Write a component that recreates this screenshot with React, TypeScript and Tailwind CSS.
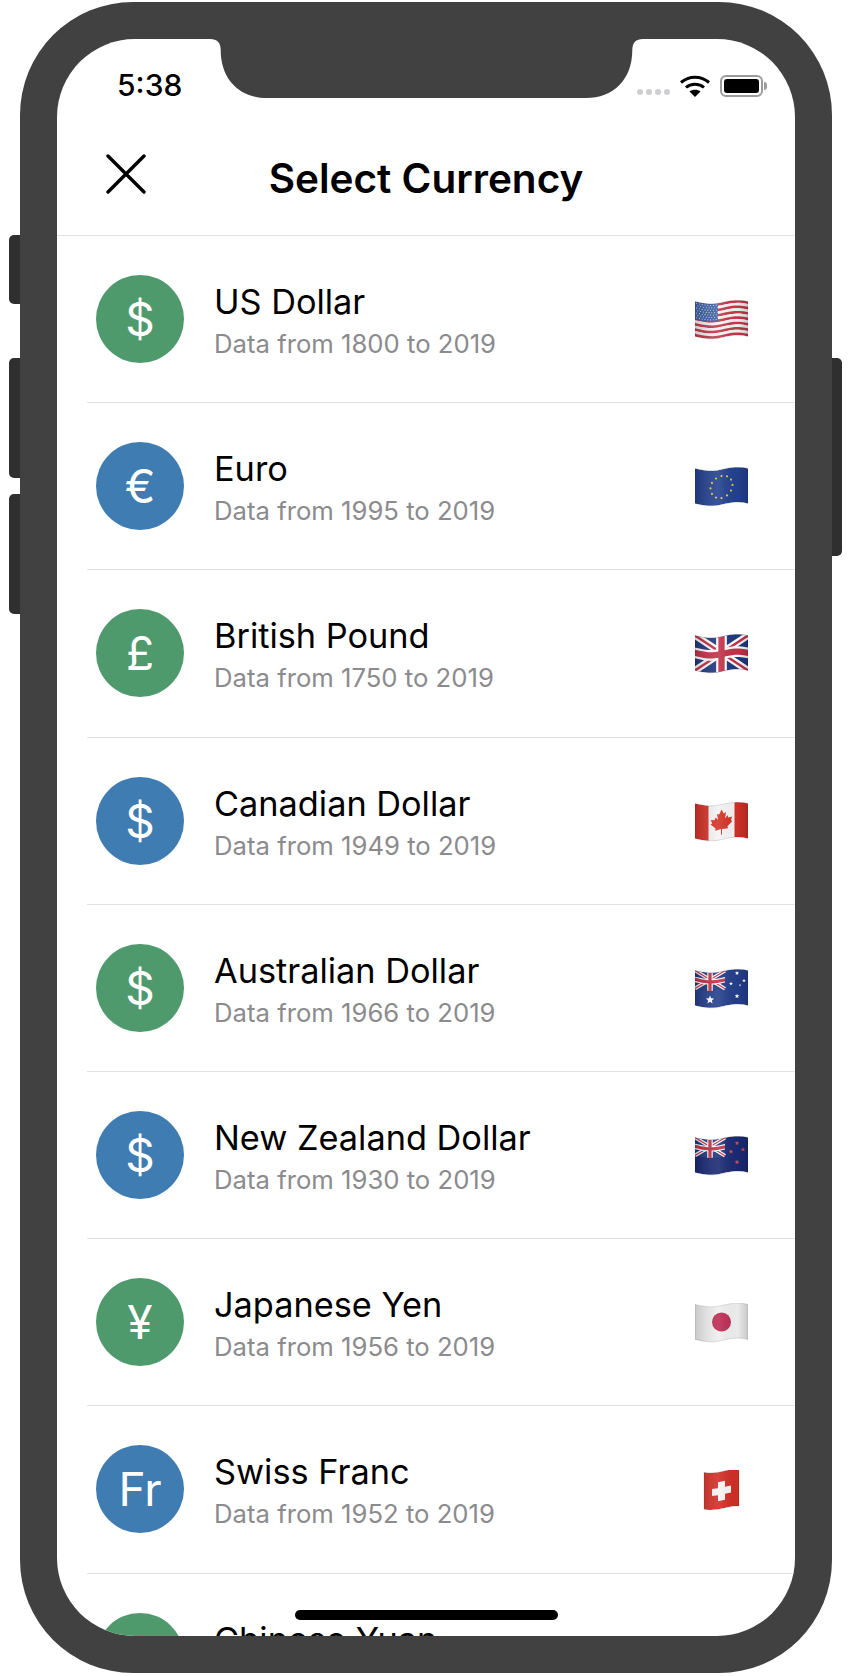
// Currency picker inside a phone frame. Flags are small wavy SVG drawings.
const BLUE = "#1f3a80";
const RED = "#c4324a";

type Pt = [number, number];

// flag wave: shifts a point vertically depending on its x
const off = (x: number) => 1.9 * Math.cos(2 * Math.PI * (x / 53 - 0.3));
const warp = (pts: Pt[]) => pts.map(([x, y]) => `${x},${(y + off(x)).toFixed(2)}`).join(" ");

function band(x0: number, x1: number, y0: number, y1: number): Pt[] {
  const top: Pt[] = [];
  const bottom: Pt[] = [];
  for (let i = 0; i <= 12; i++) {
    const x = x0 + ((x1 - x0) * i) / 12;
    top.push([x, y0]);
    bottom.unshift([x, y1]);
  }
  return [...top, ...bottom];
}

function Band({ x0, x1, y0, y1, fill }: { x0: number; x1: number; y0: number; y1: number; fill: string }) {
  return <polygon points={warp(band(x0, x1, y0, y1))} fill={fill} />;
}

function Dot({ x, y, r, fill }: { x: number; y: number; r: number; fill: string }) {
  return <circle cx={x} cy={y + off(x)} r={r} fill={fill} />;
}

function Star({ x, y, r, fill }: { x: number; y: number; r: number; fill: string }) {
  const pts: Pt[] = [];
  for (let i = 0; i < 10; i++) {
    const a = (Math.PI * i) / 5 - Math.PI / 2;
    const rr = i % 2 ? r * 0.45 : r;
    pts.push([x + rr * Math.cos(a), y + rr * Math.sin(a)]);
  }
  return <polygon points={pts.map(([a, b]) => `${a},${b + off(x)}`).join(" ")} fill={fill} />;
}

function Jack({ w, h }: { w: number; h: number }) {
  const cx = w / 2;
  const cy = 1 + h / 2;
  const d = (x0: number, y0: number, x1: number, y1: number, c: string, sw: number) => (
    <line
      x1={x0}
      y1={y0 + off(x0)}
      x2={x1}
      y2={y1 + off(x1)}
      stroke={c}
      strokeWidth={sw}
    />
  );
  const t = h * 0.09;
  return (
    <>
      <Band x0={0} x1={w} y0={1} y1={1 + h} fill={BLUE} />
      {d(0, 1, w, 1 + h, "#fff", h * 0.2)}
      {d(0, 1 + h, w, 1, "#fff", h * 0.2)}
      {d(0, 1, w, 1 + h, RED, h * 0.07)}
      {d(0, 1 + h, w, 1, RED, h * 0.07)}
      <Band x0={0} x1={w} y0={cy - t * 1.7} y1={cy + t * 1.7} fill="#fff" />
      <polygon points={warp([[cx - t * 1.7, 1], [cx + t * 1.7, 1], [cx + t * 1.7, 1 + h], [cx - t * 1.7, 1 + h]])} fill="#fff" />
      <Band x0={0} x1={w} y0={cy - t} y1={cy + t} fill={RED} />
      <polygon points={warp([[cx - t, 1], [cx + t, 1], [cx + t, 1 + h], [cx - t, 1 + h]])} fill={RED} />
    </>
  );
}

function FlagArt({ code }: { code: string }) {
  if (code === "us") {
    const stripes = [];
    for (let i = 0; i < 13; i++) {
      stripes.push(
        <Band key={i} x0={0} x1={53} y0={1 + (i * 35) / 13} y1={1 + ((i + 1) * 35) / 13} fill={i % 2 ? "#f4f2f2" : "#c23a4a"} />,
      );
    }
    const dots = [];
    for (let r = 0; r < 7; r++) {
      for (let c = 0; c < 8; c++) {
        dots.push(<Dot key={`${r}-${c}`} x={1.6 + c * 2.8 + (r % 2) * 1.2} y={2.6 + r * 2.4} r={0.55} fill="#dfe6f2" />);
      }
    }
    return (
      <>
        {stripes}
        <Band x0={0} x1={23} y0={1} y1={19} fill="#3f62a6" />
        {dots}
      </>
    );
  }
  if (code === "eu") {
    const stars = [];
    for (let i = 0; i < 12; i++) {
      const a = (i * Math.PI) / 6;
      stars.push(<Dot key={i} x={26.5 + 11 * Math.sin(a)} y={18.5 - 11 * Math.cos(a)} r={1.05} fill="#e6c84a" />);
    }
    return (
      <>
        <Band x0={0} x1={53} y0={1} y1={36} fill="#23418f" />
        {stars}
      </>
    );
  }
  if (code === "gb") return <Jack w={53} h={35} />;
  if (code === "ca") {
    const leaf: Pt[] = [
      [26.5, 6], [28.8, 10.5], [31, 9.5], [30, 15.5], [32.5, 13], [33.5, 15.5], [37.2, 15], [35.8, 18.5], [37.4, 19.5],
      [32.4, 24], [33, 26], [27, 25.4], [27, 31], [26, 31], [26, 25.4], [20, 26], [20.6, 24], [15.6, 19.5],
      [17.2, 18.5], [15.8, 15], [19.5, 15.5], [20.5, 13], [23, 15.5], [22, 9.5], [24.2, 10.5],
    ];
    return (
      <>
        <Band x0={0} x1={53} y0={1} y1={36} fill="#f5f3f3" />
        <Band x0={0} x1={13.5} y0={1} y1={36} fill="#d53328" />
        <Band x0={39.5} x1={53} y0={1} y1={36} fill="#cf3026" />
        <polygon points={warp(leaf)} fill="#d53328" />
      </>
    );
  }
  if (code === "au") {
    return (
      <>
        <Band x0={0} x1={53} y0={1} y1={36} fill="#243f8c" />
        <Jack w={30} h={18} />
        <Star x={15} y={28} r={4.4} fill="#fff" />
        <Star x={42} y={5} r={2.2} fill="#fff" />
        <Star x={36} y={15} r={2} fill="#fff" />
        <Star x={49} y={12} r={2} fill="#fff" />
        <Star x={45} y={17} r={1.2} fill="#fff" />
        <Star x={42} y={28} r={2.4} fill="#fff" />
      </>
    );
  }
  if (code === "nz") {
    return (
      <>
        <Band x0={0} x1={53} y0={1} y1={36} fill="#1b2a74" />
        <Jack w={30} h={18} />
        <Star x={42} y={8} r={2.4} fill="#c4525a" />
        <Star x={36} y={16} r={2.4} fill="#c4525a" />
        <Star x={48} y={14} r={2.4} fill="#c4525a" />
        <Star x={42} y={27} r={2.6} fill="#c4525a" />
      </>
    );
  }
  if (code === "jp") {
    return (
      <>
        <Band x0={0} x1={53} y0={1} y1={36} fill="#efefef" />
        <Dot x={26.5} y={17.5} r={9.5} fill="#bd2c55" />
      </>
    );
  }
  // Swiss flag is square, drawn in the middle of the box
  return (
    <>
      <Band x0={9} x1={44} y0={0} y1={37} fill="#d02e26" />
      <polygon points={warp([[23, 10], [30, 10], [30, 16], [36, 16], [36, 23], [30, 23], [30, 29], [23, 29], [23, 23], [17, 23], [17, 16], [23, 16]])} fill="#f7f4f4" />
    </>
  );
}

function Flag({ code }: { code: string }) {
  const outline = code === "ch" ? band(9, 44, 0, 37) : band(0, 53, 1, 36);
  return (
    <svg width="53" height="40" viewBox="0 -1 53 40" className="mt-[2px] shrink-0">
      <defs>
        <clipPath id={`clip-${code}`}>
          <polygon points={warp(outline)} />
        </clipPath>
        <linearGradient id={`shade-${code}`} x1="0" y1="0" x2="1" y2="0">
          <stop offset="0" stopColor="#000" stopOpacity="0.16" />
          <stop offset="0.45" stopColor="#fff" stopOpacity="0.1" />
          <stop offset="0.8" stopColor="#000" stopOpacity="0.02" />
          <stop offset="1" stopColor="#000" stopOpacity="0.16" />
        </linearGradient>
      </defs>
      <g clipPath={`url(#clip-${code})`}>
        <FlagArt code={code} />
        <rect x="0" y="-2" width="53" height="42" fill={`url(#shade-${code})`} />
      </g>
      <polygon points={warp(outline)} fill="none" stroke="#000" strokeOpacity="0.16" strokeWidth="0.8" />
    </svg>
  );
}

const currencies = [
  { name: "US Dollar", sub: "Data from 1800 to 2019", sym: "$", tone: "green", flag: "us" },
  { name: "Euro", sub: "Data from 1995 to 2019", sym: "€", tone: "blue", flag: "eu" },
  { name: "British Pound", sub: "Data from 1750 to 2019", sym: "£", tone: "green", flag: "gb" },
  { name: "Canadian Dollar", sub: "Data from 1949 to 2019", sym: "$", tone: "blue", flag: "ca" },
  { name: "Australian Dollar", sub: "Data from 1966 to 2019", sym: "$", tone: "green", flag: "au" },
  { name: "New Zealand Dollar", sub: "Data from 1930 to 2019", sym: "$", tone: "blue", flag: "nz" },
  { name: "Japanese Yen", sub: "Data from 1956 to 2019", sym: "¥", tone: "green", flag: "jp" },
  { name: "Swiss Franc", sub: "Data from 1952 to 2019", sym: "Fr", tone: "blue", flag: "ch" },
  // last row runs under the bottom edge, only its top shows
  { name: "Chinese Yuan", sub: "", sym: "", tone: "green", flag: "" },
];

function Row({ c }: { c: (typeof currencies)[number] }) {
  return (
    <div className="ml-[30px] flex h-[167.2px] shrink-0 items-center border-b-[1.5px] border-[#e1e1e4] pl-[9px] pr-[47px]">
      <div
        className={`flex h-[88px] w-[88px] shrink-0 items-center justify-center rounded-full text-[46px] font-normal leading-none text-white ${
          c.tone === "green" ? "bg-[#4f9a6c]" : "bg-[#3e7cb1]"
        }`}
      >
        {c.sym}
      </div>
      <div className="ml-[30px] flex h-[80px] flex-1 flex-col pt-[2px]">
        <div className="text-[34.3px] leading-[42px] text-black">{c.name}</div>
        <div className="mt-[5px] text-[25.7px] leading-[32px] text-[#8b8b8e]">{c.sub}</div>
      </div>
      {c.flag && <Flag code={c.flag} />}
    </div>
  );
}

function StatusIcons() {
  return (
    <div className="mb-[5px] flex items-center">
      <div className="mt-[12px] flex gap-[3px]">
        {[0, 1, 2, 3].map((i) => (
          <span key={i} className="h-[6px] w-[6px] rounded-full bg-[#cfcfd1]" />
        ))}
      </div>
      <svg width="30" height="22" viewBox="0 0 30 22" className="ml-[10px]">
        <path d="M1 7.5 C9 0.5 21 0.5 29 7.5" fill="none" stroke="#000" strokeWidth="3" />
        <path d="M6 12.5 C11 8 19 8 24 12.5" fill="none" stroke="#000" strokeWidth="3" />
        <path d="M15 22 L9.5 16.6 C12.5 14 17.5 14 20.5 16.6 Z" fill="#000" />
      </svg>
      <div className="ml-[10px] flex items-center">
        <div className="flex h-[22px] w-[43px] rounded-[6px] border-2 border-[#9c9c9c] p-[2px]">
          <div className="flex-1 rounded-[3px] bg-black" />
        </div>
        <div className="ml-[1px] h-[8px] w-[3px] rounded-r-full bg-[#9c9c9c]" />
      </div>
    </div>
  );
}

export default function App() {
  return (
    <div className="h-[1676px] w-[852px] overflow-hidden bg-white pl-[20px] pt-[2px] font-['Inter',sans-serif]">
      <div className="relative h-[1671px] w-[812px] rounded-[113px] bg-[#414141] p-[37px]">
        {/* side buttons */}
        <div className="absolute left-[-11px] top-[233px] h-[69px] w-[11px] rounded-l-[5px] bg-[#2f2f2f]" />
        <div className="absolute left-[-11px] top-[356px] h-[120px] w-[11px] rounded-l-[5px] bg-[#2f2f2f]" />
        <div className="absolute left-[-11px] top-[492px] h-[120px] w-[11px] rounded-l-[5px] bg-[#2f2f2f]" />
        <div className="absolute right-[-10px] top-[356px] h-[198px] w-[10px] rounded-r-[5px] bg-[#2f2f2f]" />

        <div className="relative flex h-full flex-col overflow-hidden rounded-[78px] bg-white">
          {/* notch */}
          <svg width="433" height="59" viewBox="0 0 433 59" className="absolute left-[153px] top-0 z-10">
            <path
              d="M0 0 Q10.7 0 10.7 11 C10.7 41 30 59 57 59 H376 C403 59 422.3 41 422.3 11 Q422.3 0 433 0 Z"
              fill="#414141"
            />
          </svg>

          <div className="flex h-[85px] shrink-0 items-end justify-between pb-[22px] pl-[60px] pr-[28px]">
            <span className="text-[30px] font-medium leading-[34px] text-black">5:38</span>
            <StatusIcons />
          </div>

          <div className="relative flex h-[112px] shrink-0 items-center justify-center border-b-[1.5px] border-[#e1e1e4]">
            <svg width="40" height="40" viewBox="0 0 40 40" className="absolute left-[49px] top-[30px]">
              <path d="M2 2 L38 38 M38 2 L2 38" stroke="#000" strokeWidth="3.4" strokeLinecap="round" />
            </svg>
            <h1 className="text-[40.5px] font-semibold leading-none text-black">Select Currency</h1>
          </div>

          <div className="flex flex-col">
            {currencies.map((c) => (
              <Row key={c.name} c={c} />
            ))}
          </div>

          <div className="absolute bottom-[16px] left-[238px] h-[10px] w-[263px] rounded-full bg-black" />
        </div>
      </div>
    </div>
  );
}
